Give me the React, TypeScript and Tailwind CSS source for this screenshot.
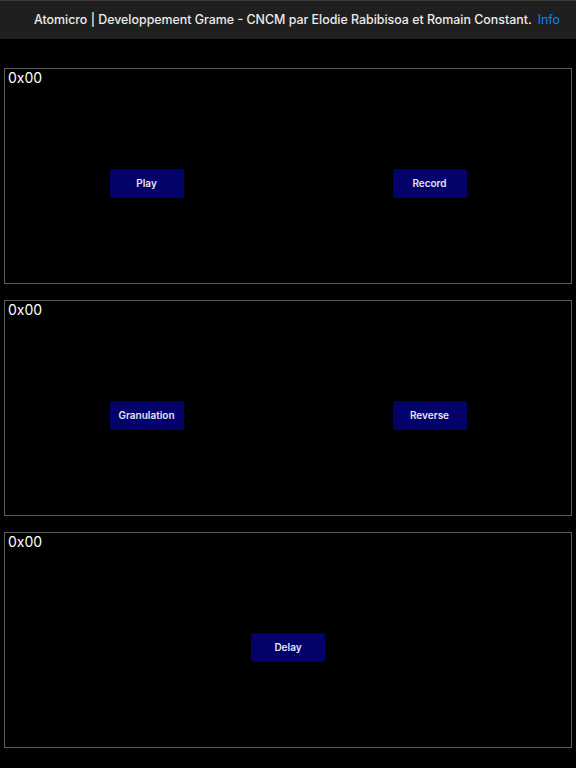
import React from 'react';

const font = { fontFamily: 'Inter, "Liberation Sans", sans-serif' };

function Btn({ label }: { label: string }) {
  return (
    <button className="w-[74px] h-[29px] rounded-[2px] bg-[#02026a] text-[10px] font-semibold text-[#e4e4f2]">
      {label}
    </button>
  );
}

function Panel({ buttons }: { buttons: string[] }) {
  return (
    <div className="h-[216px] border border-[#5a5a5a] flex flex-col">
      <div className="pl-[3px] pt-[1px] text-[14px] leading-[15px] text-white">0x00</div>
      <div className={`flex-1 grid items-center justify-items-center pb-[1px] ${buttons.length === 1 ? 'grid-cols-1' : 'grid-cols-2'}`}>
        {buttons.map((b) => (
          <Btn key={b} label={b} />
        ))}
      </div>
    </div>
  );
}

export default function App() {
  return (
    <div className="w-[576px] h-[768px] bg-black overflow-hidden" style={font}>
      <div className="h-[39px] bg-[#1f1f1f] border-t border-[#3a3a3a] flex items-center justify-end pr-[16px] pt-[1px] text-[12.4px] font-medium">
        <span className="text-[#ececec]">
          Atomicro | Developpement Grame - CNCM par Elodie Rabibisoa et Romain Constant.
        </span>
        <span className="ml-[6px] text-[#0a84ff] font-normal">Info</span>
      </div>
      <div className="pt-[29px] px-1 flex flex-col gap-4">
        <Panel buttons={['Play', 'Record']} />
        <Panel buttons={['Granulation', 'Reverse']} />
        <Panel buttons={['Delay']} />
      </div>
    </div>
  );
}
